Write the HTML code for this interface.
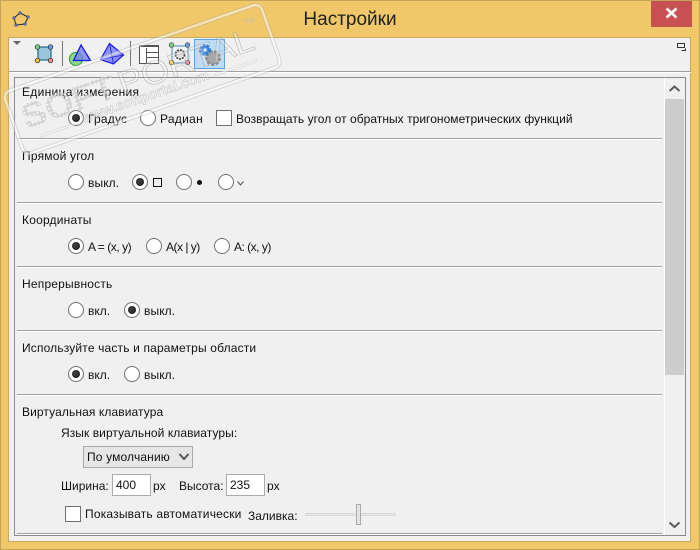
<!DOCTYPE html>
<html><head><meta charset="utf-8">
<style>
html,body{margin:0;padding:0}
body{width:700px;height:550px;position:relative;overflow:hidden;background:#f0c86a;font-family:"Liberation Sans",Arial,sans-serif;font-size:12px;color:#111}
.abs,.t,.r,.hl,.cb{position:absolute}
.t{white-space:nowrap;line-height:14px}
.r{width:14px;height:14px;border:1px solid #707070;border-radius:50%;background:#fff;box-sizing:content-box}
.r.on::after{content:"";position:absolute;left:3px;top:3px;width:8px;height:8px;border-radius:50%;background:radial-gradient(circle at 40% 40%,#444,#111)}
.hl{left:17px;width:645px;height:1px;background:#a0a0a0;box-shadow:0 1px 0 #fff}
.cb{width:14px;height:14px;border:1px solid #707070;background:#fff}
.in{position:absolute;width:37px;height:20px;border:1px solid #ababab;background:#fff;box-sizing:content-box;line-height:20px;padding-left:0;text-indent:3px;font-size:12px}
</style></head><body>
<div class="abs" style="left:0;top:0;width:698px;height:548px;border:1px solid #c4a458"></div>
<div class="abs" style="left:651px;top:1px;width:41px;height:26px;background:#c75050"></div>
<svg class="abs" style="left:664px;top:6px" width="16" height="14"><path d="M2.500 2.500L12.500 11.500M12.500 2.500L2.500 11.500" stroke="#fff" stroke-width="2.600"/></svg>
<svg class="abs" style="left:12px;top:11px" width="18" height="17"><path d="M8 2L16 6L13 13L4 14L2 7Z" fill="none" stroke="#333" stroke-width="1.100"/><g fill="#5a6bd0" stroke="#334" stroke-width=".3"><circle cx="8" cy="2" r="1.500"/><circle cx="16" cy="6" r="1.500"/><circle cx="13" cy="13" r="1.500"/><circle cx="4" cy="14" r="1.500"/><circle cx="2" cy="7" r="1.500"/></g></svg>
<div class="t" style="left:0;width:700px;top:9px;text-align:center;font-size:19px;line-height:22px;color:#222">Настройки</div>

<div class="abs" style="left:8px;top:37px;width:683px;height:505px;background:#f0f0f0;border:1px solid #c9a95c;box-sizing:border-box"></div>
<div class="abs" style="left:9px;top:71px;width:682px;height:1px;background:#a0a0a0;box-shadow:0 1px 0 #fff"></div>

<svg class="abs" style="left:0;top:30px" width="260" height="45">
<path d="M13 11h8l-4 4z" fill="#666"/>
<rect x="38" y="17" width="13" height="13" fill="#9cc4da" stroke="#1c6a90" stroke-width="1.200"/>
<circle cx="37.500" cy="17" r="2.300" fill="#7ecf7e" stroke="#222" stroke-width=".7"/><circle cx="50.500" cy="17" r="2.300" fill="#6aa0ea" stroke="#222" stroke-width=".7"/><circle cx="37.500" cy="30.500" r="2.300" fill="#f6c830" stroke="#222" stroke-width=".7"/><circle cx="50.500" cy="30.500" r="2.300" fill="#f09090" stroke="#222" stroke-width=".7"/>
<rect x="62" y="11" width="1" height="25" fill="#777"/>
<circle cx="76" cy="29" r="6.500" fill="#8fd88f" stroke="#3aa83a" stroke-width="1.300"/>
<path d="M81 15L90.500 30.500H73.500Z" fill="#6f7cf2" fill-opacity=".75" stroke="#1a1af0" stroke-width="1.300"/>
<path d="M109.500 13.500L123.500 25L113.500 34L100.500 29.500Z" fill="#8a93f4" stroke="#1a1af0" stroke-width="1.200"/><path d="M109.500 13.500L113.500 34M100.500 29.500L123.500 25" stroke="#1a1af0" stroke-width=".8" fill="none"/>
<rect x="130" y="11" width="1" height="25" fill="#777"/>
<rect x="139.500" y="15.500" width="19" height="18" fill="#fff" stroke="#555"/>
<rect x="139" y="15" width="20" height="2" fill="#555"/>
<path d="M146.500 18V33.500M146.500 22.500H158.500M146.500 27.500H158.500" stroke="#555" fill="none"/>
<rect x="172" y="16" width="16" height="17" fill="#eef3f6" stroke="#4d86b8"/>
<circle cx="180" cy="24.500" r="4.500" fill="#e4e4e4" stroke="#333" stroke-width="1.500" stroke-dasharray="2 1"/>
<circle cx="171.500" cy="15" r="2.300" fill="#7ecf7e" stroke="#333" stroke-width=".6"/><circle cx="187.500" cy="15" r="2.300" fill="#6aa0ea" stroke="#333" stroke-width=".6"/><circle cx="171.500" cy="32.500" r="2.300" fill="#f6c830" stroke="#333" stroke-width=".6"/><circle cx="187.500" cy="32.500" r="2.300" fill="#f09090" stroke="#333" stroke-width=".6"/>
<rect x="194.500" y="9.500" width="30" height="29" fill="#bcdcf5" stroke="#5aa3e6"/>
<circle cx="213" cy="28" r="6.500" fill="#a8a8a8" stroke="#8f8f8f" stroke-width="3" stroke-dasharray="3 1.500"/>
<circle cx="205" cy="20" r="4.500" fill="#4a90e2" stroke="#2f7ad8" stroke-width="3" stroke-dasharray="2.500 1.300"/>
<circle cx="205" cy="20" r="1.800" fill="#cfe4f8"/>
</svg>
<svg class="abs" style="left:676px;top:42px" width="12" height="10"><path d="M1.500 1.500H8.500V5.500H1.500Z M9.500 6.500V8.500H5.500" fill="none" stroke="#333" stroke-width="1"/></svg>

<div class="abs" style="left:14px;top:77px;width:672px;height:459px;border:1px solid #8a8a92;box-sizing:border-box"></div>
<div class="abs" style="left:664px;top:78px;width:1px;height:457px;background:#fff"></div>
<div class="abs" style="left:665px;top:99px;width:19px;height:276px;background:#cdcdcd"></div>
<svg class="abs" style="left:668px;top:84px" width="13" height="10"><path d="M1.500 7L6.500 2.500L11.500 7" fill="none" stroke="#5a5a5a" stroke-width="2"/></svg>
<svg class="abs" style="left:668px;top:520px" width="13" height="10"><path d="M1.500 2.500L6.500 7L11.500 2.500" fill="none" stroke="#5a5a5a" stroke-width="2"/></svg>

<div class="t" style="left:22px;top:85px;letter-spacing:.3px">Единица измерения</div>
<div class="r on" style="left:68px;top:110px"></div><div class="t" style="left:88px;top:112px;letter-spacing:.2px">Градус</div>
<div class="r" style="left:140px;top:110px"></div><div class="t" style="left:160px;top:112px;letter-spacing:.3px">Радиан</div>
<div class="cb" style="left:216px;top:110px"></div><div class="t" style="left:236px;top:112px;letter-spacing:.04px">Возвращать угол от обратных тригонометрических функций</div>
<div class="hl" style="top:138px"></div>

<div class="t" style="left:22px;top:149px;letter-spacing:.2px">Прямой угол</div>
<div class="r" style="left:68px;top:174px"></div><div class="t" style="left:88px;top:176px;letter-spacing:.1px">выкл.</div>
<div class="r on" style="left:132px;top:174px"></div>
<div class="abs" style="left:153px;top:178px;width:7px;height:7px;border:1px solid #111"></div>
<div class="r" style="left:176px;top:174px"></div>
<div class="abs" style="left:197px;top:180px;width:5px;height:5px;border-radius:50%;background:#111"></div>
<div class="r" style="left:218px;top:174px"></div>
<svg class="abs" style="left:236px;top:180px" width="10" height="7"><path d="M1.500 1.500L4.500 5L7.500 1.500" fill="none" stroke="#555" stroke-width="1"/></svg>
<div class="hl" style="top:202px"></div>

<div class="t" style="left:22px;top:213px;letter-spacing:.2px">Координаты</div>
<div class="r on" style="left:68px;top:238px"></div><div class="t" style="left:88px;top:240px;letter-spacing:-.45px">A = (x, y)</div>
<div class="r" style="left:146px;top:238px"></div><div class="t" style="left:166px;top:240px;letter-spacing:-.5px">A(x | y)</div>
<div class="r" style="left:214px;top:238px"></div><div class="t" style="left:234px;top:240px;letter-spacing:-.5px">A: (x, y)</div>
<div class="hl" style="top:266px"></div>

<div class="t" style="left:22px;top:277px;letter-spacing:.2px">Непрерывность</div>
<div class="r" style="left:68px;top:302px"></div><div class="t" style="left:88px;top:304px">вкл.</div>
<div class="r on" style="left:124px;top:302px"></div><div class="t" style="left:144px;top:304px;letter-spacing:.1px">выкл.</div>
<div class="hl" style="top:330px"></div>

<div class="t" style="left:22px;top:341px;letter-spacing:.16px">Используйте часть и параметры области</div>
<div class="r on" style="left:68px;top:366px"></div><div class="t" style="left:88px;top:368px">вкл.</div>
<div class="r" style="left:124px;top:366px"></div><div class="t" style="left:144px;top:368px;letter-spacing:.1px">выкл.</div>
<div class="hl" style="top:394px"></div>

<div class="t" style="left:22px;top:405px;letter-spacing:.1px">Виртуальная клавиатура</div>
<div class="t" style="left:61px;top:426px;letter-spacing:.07px">Язык виртуальной клавиатуры:</div>
<div class="abs" style="left:83px;top:446px;width:108px;height:20px;border:1px solid #ababab;background:#e6e6e6;line-height:20px;text-indent:3px;letter-spacing:.15px">По умолчанию</div>
<svg class="abs" style="left:178px;top:452px" width="12" height="10"><path d="M1.500 2L6 7L10.500 2" fill="none" stroke="#555" stroke-width="2"/></svg>
<div class="t" style="left:61px;top:479px">Ширина:</div>
<div class="in" style="left:112px;top:474px">400</div>
<div class="t" style="left:153px;top:479px">px</div>
<div class="t" style="left:179px;top:479px">Высота:</div>
<div class="in" style="left:226px;top:474px">235</div>
<div class="t" style="left:267px;top:479px">px</div>
<div class="cb" style="left:65px;top:506px"></div>
<div class="t" style="left:85px;top:507px;letter-spacing:.2px">Показывать автоматически</div>
<div class="t" style="left:248px;top:509px">Заливка:</div>
<div class="abs" style="left:305px;top:513px;width:89px;height:1px;border:1px solid #d8d8d8;background:#e8e8e8"></div>
<div class="abs" style="left:356px;top:504px;width:3px;height:19px;border:1px solid #aaa;background:#e4e4e4"></div>
<div class="abs" style="left:17px;top:533px;width:645px;height:1px;background:#a0a0a0;box-shadow:0 1px 0 #fff"></div>

<svg class="abs" style="left:0;top:0" width="300" height="160">
<defs>
<pattern id="d" width="4" height="4" patternUnits="userSpaceOnUse"><rect x=".5" y=".5" width="3" height="3" fill="#f6f6f6" stroke="#bdbdbd" stroke-width=".8"/></pattern>
</defs>
<g transform="translate(3,93) rotate(-19.300)">
<g opacity=".5">
<rect x="0" y="0" width="272" height="66" rx="7" fill="none" stroke="#a8a8a8" stroke-width="4"/>
<rect x="0" y="0" width="272" height="66" rx="7" fill="none" stroke="#fff" stroke-width="2.500"/>
<text x="112" y="42" font-family="Liberation Sans" font-size="33" fill="#fff" fill-opacity=".5" stroke="#999" stroke-width=".8" textLength="142" lengthAdjust="spacingAndGlyphs">PORTAL</text>
<text x="250" y="16" font-family="Liberation Sans" font-size="8" fill="#fff" stroke="#999" stroke-width=".3">TM</text>
<text x="66" y="55" font-family="Liberation Sans" font-size="14" font-weight="bold" fill="#fff" fill-opacity=".5" stroke="#999" stroke-width=".5" textLength="134" lengthAdjust="spacingAndGlyphs">www.softportal.com</text>
<rect x="22" y="52" width="40" height="2" fill="#fff" stroke="#aaa" stroke-width=".5"/>
<rect x="206" y="52" width="44" height="2" fill="#fff" stroke="#aaa" stroke-width=".5"/>
</g>
<text x="10" y="42" font-family="Liberation Sans" font-size="35" font-weight="bold" fill="url(#d)" opacity=".7" textLength="98" lengthAdjust="spacingAndGlyphs">SOFT</text>
</g>
</svg>
</body></html>
